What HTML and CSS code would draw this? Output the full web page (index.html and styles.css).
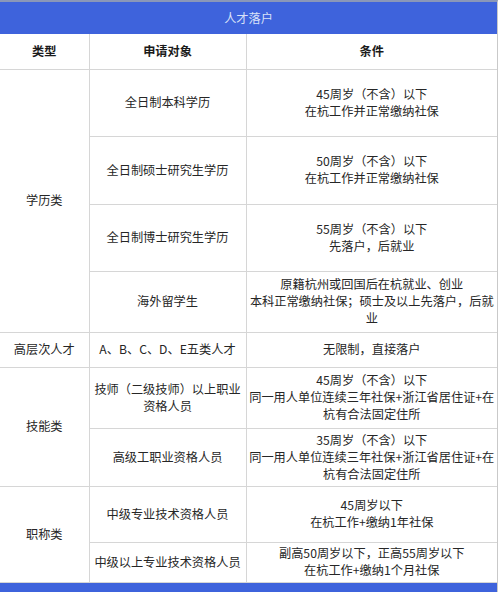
FILE: index.html
```html
<!DOCTYPE html>
<html lang="zh-CN">
<head>
<meta charset="utf-8">
<title>人才落户</title>
<link rel="stylesheet" href="styles.css">
</head>
<body>
<div class="sheet">
  <div class="title">人才落户</div>
  <table class="grid">
    <colgroup>
      <col class="c1"><col class="c2"><col class="c3">
    </colgroup>
    <thead>
      <tr class="h-head">
        <th>类型</th><th>申请对象</th><th>条件</th>
      </tr>
    </thead>
    <tbody>
      <tr class="h67">
        <td rowspan="4">学历类</td>
        <td>全日制本科学历</td>
        <td>45周岁（不含）以下<br>在杭工作并正常缴纳社保</td>
      </tr>
      <tr class="h68">
        <td>全日制硕士研究生学历</td>
        <td>50周岁（不含）以下<br>在杭工作并正常缴纳社保</td>
      </tr>
      <tr class="h67">
        <td>全日制博士研究生学历</td>
        <td>55周岁（不含）以下<br>先落户，后就业</td>
      </tr>
      <tr class="h61">
        <td>海外留学生</td>
        <td>原籍杭州或回国后在杭就业、创业<br>本科正常缴纳社保；硕士及以上先落户，后就<br>业</td>
      </tr>
      <tr class="h35">
        <td>高层次人才</td>
        <td>A、B、C、D、E五类人才</td>
        <td>无限制，直接落户</td>
      </tr>
      <tr class="h61">
        <td rowspan="2">技能类</td>
        <td>技师（二级技师）以上职业<br>资格人员</td>
        <td>45周岁（不含）以下<br>同一用人单位连续三年社保+浙江省居住证+在<br>杭有合法固定住所</td>
      </tr>
      <tr class="h58">
        <td>高级工职业资格人员</td>
        <td>35周岁（不含）以下<br>同一用人单位连续三年社保+浙江省居住证+在<br>杭有合法固定住所</td>
      </tr>
      <tr class="h56">
        <td rowspan="2">职称类</td>
        <td>中级专业技术资格人员</td>
        <td>45周岁以下<br>在杭工作+缴纳1年社保</td>
      </tr>
      <tr class="h40">
        <td>中级以上专业技术资格人员</td>
        <td>副高50周岁以下，正高55周岁以下<br>在杭工作+缴纳1个月社保</td>
      </tr>
    </tbody>
  </table>
  <div class="footer"></div>
</div>
</body>
</html>
```
FILE: styles.css
```css
html, body {
  margin: 0;
  padding: 0;
  background: #ffffff;
}
body {
  font-family: "Noto Sans CJK SC", "Noto Sans", "Liberation Sans", sans-serif;
  color: #262626;
}
.sheet {
  width: 497px;
  border-right: 1px solid #c9c9c9;
  border-top: 2px solid #8a97b8;
}
.title {
  height: 32px;
  background: #3e63dc;
  color: #d9e1f8;
  font-size: 12.2px;
  display: flex;
  align-items: center;
  justify-content: center;
}
.grid {
  width: 497px;
  border-collapse: collapse;
  table-layout: fixed;
}
.c1 { width: 89px; }
.c2 { width: 157px; }
.c3 { width: 251px; }
.grid th,
.grid td {
  border: 1px solid #d6d6d6;
  padding: 0 1px;
  text-align: center;
  vertical-align: middle;
  font-size: 12.2px;
  line-height: 17px;
  white-space: nowrap;
  box-sizing: border-box;
}
.grid tr > :first-child { border-left: none; }
.grid tr > :last-child { border-right: none; }
.grid th {
  font-weight: bold;
  color: #1a1a1a;
}
.grid thead th { border-top: none; }
.h-head { height: 35px; }
.h67 { height: 67px; }
.h68 { height: 68px; }
.h61 { height: 61px; }
.h35 { height: 35px; }
.h58 { height: 58px; }
.h56 { height: 56px; }
.h40 { height: 40px; }
.footer {
  height: 12px;
  background: #3e63dc;
}
```
